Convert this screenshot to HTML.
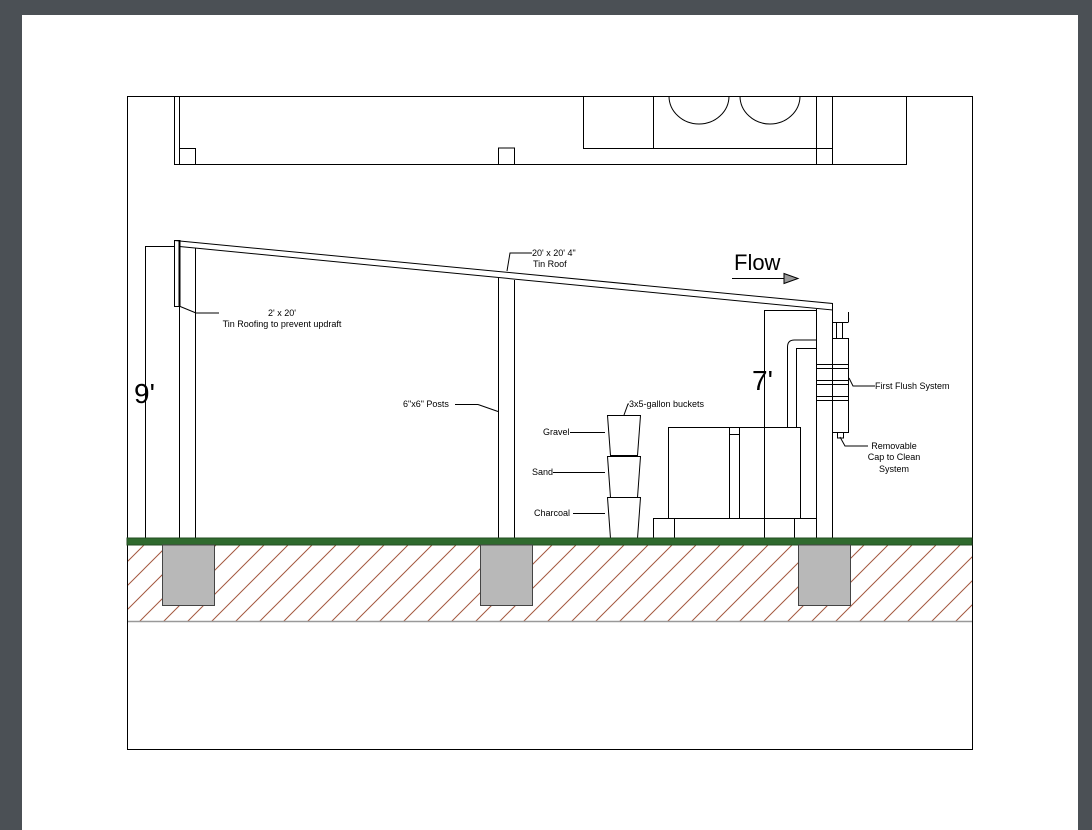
<!DOCTYPE html>
<html><head><style>
html,body{margin:0;padding:0;width:1092px;height:830px;overflow:hidden;background:#4b5055}
svg{display:block}
text{font-family:"Liberation Sans",Arial,sans-serif;fill:#000}
</style></head><body>
<svg width="1092" height="830" viewBox="0 0 1092 830" xmlns="http://www.w3.org/2000/svg">
<defs>
<pattern id="h" patternUnits="userSpaceOnUse" x="0" y="545" width="24" height="24">
<path d="M-1 25L25 -1M-13 13L13 -13M11 37L37 11" stroke="#a4583f" stroke-width="1" fill="none"/>
</pattern>
</defs>
<rect x="22" y="15" width="1056" height="830" fill="#fff"/>
<g fill="none" stroke="#000" stroke-width="1">
<rect x="127.5" y="96.5" width="845" height="653"/>
<path d="M174.5 96V164.5H906.5V96M179.5 96V164M179.5 148.5h16v16M498.5 164v-16h16v16"/>
<path d="M583.5 96V148.5H832.5M653.5 96V148.5M816.5 96V164.5M832.5 96V164.5"/>
<path d="M669 96a30 28 0 0 0 60 0M740 96a30 28 0 0 0 60 0"/>
<path d="M174.5 240.5L832.5 303.5V310L179.5 246.5"/>
<rect x="174.5" y="240.5" width="5" height="66"/>
<line x1="179.5" y1="240" x2="179.5" y2="306" stroke-width="2"/>
<path d="M145.5 540V246.5H174M764.5 540V310.5H816"/>
<path d="M179.5 306V540M195.5 248V540M498.5 278V540M514.5 280V540M816.5 309V540M832.5 310V540"/>
<path d="M787.5 427V347q0-7 7-7H816M796.5 427V348.5H816"/>
<path d="M832.5 338.5h16v94h-16M816 364.5h33M816 368.5h33M816 380.5h33M816 384.5h33M816 396.5h33M816 400.5h33"/>
<path d="M836.5 322v16M842.5 322v16M832.5 322.5h16M848.5 312v10M837.5 432v6h6v-6"/>
<rect x="668.5" y="427.5" width="132" height="91"/>
<path d="M729.5 427v91M739.5 427v91M729.5 434.5h10"/>
<path d="M653.5 540V518.5H816M674.5 518v22M794.5 518v22"/>
<path d="M607.5 415.5h33l-3 40h-27zM607.5 456.5h33l-3 41h-27zM607.5 497.5h33l-3 41h-27z"/>
<path d="M179 306l17 7h23M507 271l3-18h22M478 404.5l20 7M455 404.5h23M624 415l4-11h1M570 432.5h35M553 472.5h52M573 513.5h32M849 378l4 8h22M840 437l5 9h23"/>
<path d="M732 278.5h52"/>
<path d="M784 273.5l14 5-14 5z" fill="#999"/>
</g>
<rect x="128" y="545" width="844" height="76" fill="url(#h)"/>
<rect x="127" y="538" width="845" height="7" fill="#2f6a2e" stroke="#234d22" stroke-width="1"/>
<line x1="128" y1="621.5" x2="972" y2="621.5" stroke="#999" stroke-width="1.5"/>
<g fill="#b8b8b8" stroke="#444" stroke-width="1">
<rect x="162.5" y="545" width="52" height="60.5"/>
<rect x="480.5" y="545" width="52" height="60.5"/>
<rect x="798.5" y="545" width="52" height="60.5"/>
</g>
<g font-size="9">
<text x="282" y="316" text-anchor="middle">2' x 20'</text>
<text x="282" y="327" text-anchor="middle">Tin Roofing to prevent updraft</text>
<text x="532" y="256">20' x 20' 4"</text>
<text x="533" y="267">Tin Roof</text>
<text x="403" y="407">6"x6" Posts</text>
<text x="629" y="407">3x5-gallon buckets</text>
<text x="543" y="435">Gravel</text>
<text x="532" y="475">Sand</text>
<text x="534" y="516">Charcoal</text>
<text x="875" y="389">First Flush System</text>
<text x="894" y="449" text-anchor="middle">Removable</text>
<text x="894" y="460" text-anchor="middle">Cap to Clean</text>
<text x="894" y="472" text-anchor="middle">System</text>
</g>
<text x="734" y="270" font-size="22">Flow</text>
<text x="134" y="403" font-size="28">9'</text>
<text x="752" y="390" font-size="28">7'</text>
</svg>
</body></html>
